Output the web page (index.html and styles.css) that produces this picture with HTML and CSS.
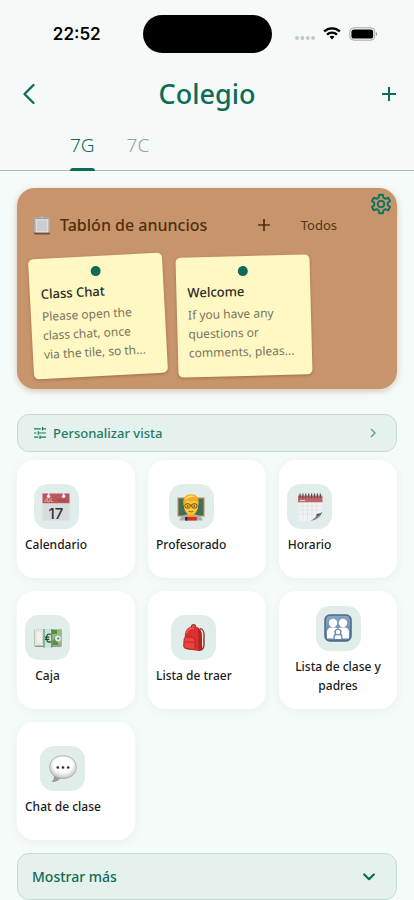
FILE: index.html
```html
<!DOCTYPE html>
<html lang="es">

<head>
    <meta charset="UTF-8">
    <meta name="viewport" content="width=device-width, initial-scale=1.0">
    <title>Colegio</title>
    <link rel="stylesheet" href="styles.css">
</head>

<body>
    <header class="top">
        <div class="status">
            <span class="time">22:52</span>
            <span class="island"></span>
            <span class="signals">
                <svg width="20" height="6" viewBox="0 0 20 6" fill="#c3c8c7">
                    <circle cx="2" cy="3" r="1.9" />
                    <circle cx="7.4" cy="3" r="1.9" />
                    <circle cx="12.8" cy="3" r="1.9" />
                    <circle cx="18.1" cy="3" r="1.9" />
                </svg>
                <svg class="wifi" width="18" height="13" viewBox="0 0 18 13" fill="none" stroke="#000" stroke-width="2.3">
                    <path d="M1.2 4.5a11.2 11.2 0 0 1 15.6 0" />
                    <path d="M4 7.6a7.2 7.2 0 0 1 10 0" />
                    <path d="M6.5 9.7a4 4 0 0 1 5 0L9 12.4z" fill="#000" stroke="none" />
                </svg>
                <svg width="29" height="14" viewBox="0 0 29 14">
                    <rect x=".8" y=".8" width="25" height="12.4" rx="4" fill="none" stroke="#a2a6a5" />
                    <rect x="2.4" y="2.4" width="21.8" height="9.2" rx="2.6" />
                    <path d="M27 5v4c1.6-.6 1.6-3.4 0-4z" fill="#9a9e9d" />
                </svg>
            </span>
        </div>
        <div class="navbar">
            <button class="icon-btn back" type="button" aria-label="Atrás">
                <svg width="14" height="22" viewBox="0 0 14 22" fill="none" stroke="#0d6b58" stroke-width="2.3" stroke-linecap="round" stroke-linejoin="round">
                    <path d="M11.5 2L2.5 11l9 9" />
                </svg>
            </button>
            <h1>Colegio</h1>
            <button class="icon-btn right" type="button" aria-label="Añadir">
                <svg width="16" height="16" viewBox="0 0 16 16" fill="none" stroke="#0d6b58" stroke-width="2">
                    <path d="M8 1v14M1 8h14" />
                </svg>
            </button>
        </div>
        <nav class="tabs">
            <button class="tab active" type="button">7G</button>
            <button class="tab" type="button">7C</button>
        </nav>
    </header>

    <main>
        <section class="board">
            <button class="gear" type="button" aria-label="Ajustes">
                <svg width="22" height="22" viewBox="0 0 24 24" fill="none" stroke="#0d7560" stroke-width="2.2" stroke-linejoin="round">
                    <path d="M9.6 4.9L10 1.8h4l.4 3.1 2.5 1.5 3-1.2 2 3.5-2.5 1.9v2.8l2.5 1.9-2 3.5-3-1.2-2.5 1.5-.4 3.1h-4l-.4-3.1-2.5-1.5-3 1.2-2-3.5 2.5-1.9v-2.8L2.1 8.7l2-3.500 3 1.200z" />
                    <circle cx="12" cy="12" r="3.6" />
                </svg>
            </button>
            <div class="board-head">
                <svg width="18" height="22" viewBox="0 0 18 22">
                    <rect x="1" y="3" width="16" height="17" rx="1" fill="#a9a9a9" />
                    <rect x="1" y="18.6" width="16" height="1.8" rx=".8" fill="#6e5038" />
                    <rect x="2.6" y="5" width="12.8" height="13.4" fill="#dedede" />
                    <rect x="4" y="6.4" width="10" height="10.6" fill="#cdcdcf" />
                    <path d="M4 4.600l2-2h1.600a1.500 1.500 0 0 1 2.800 0H12l2 2z" fill="#b9bcbe" stroke="#8b8783" stroke-width=".5" />
                </svg>
                <h2>Tablón de anuncios</h2>
                <button class="icon-btn" type="button" aria-label="Nuevo anuncio">
                    <svg width="14" height="14" viewBox="0 0 14 14" fill="none" stroke="#4f300c" stroke-width="1.7">
                        <path d="M7 1v12M1 7h12" />
                    </svg>
                </button>
                <a class="all" href="#">Todos</a>
            </div>
            <div class="notes">
                <article class="note tilt-more">
                    <span class="pin"></span>
                    <h3>Class Chat</h3>
                    <p>Please open the<br>class chat, once<br>via the tile, so th...</p>
                </article>
                <article class="note tilt-less">
                    <span class="pin"></span>
                    <h3>Welcome</h3>
                    <p>If you have any<br>questions or<br>comments, pleas...</p>
                </article>
            </div>
        </section>

        <button class="bar customize" type="button">
            <svg width="12" height="12" viewBox="0 0 12 12" fill="none" stroke="#1f7a65" stroke-width="1.2">
                <path d="M0 1.8h6.8M9 1.8h3M8.5 0v3.6M0 6h2.4M5 6h7M4.3 4.2v3.6M0 10.2h4.4M6.6 10.2H12M6 8.4V12" />
            </svg>
            <span>Personalizar vista</span>
            <svg width="6" height="10" viewBox="0 0 6 10" fill="none" stroke="#5f9f8f" stroke-width="1.4">
                <path d="M1 1l4 4-4 4" />
            </svg>
        </button>

        <div class="tiles">
            <a class="tile" href="#">
                <span class="tile-body">
                    <span class="tile-icon">
                        <svg width="28" height="28" viewBox="0 0 28 28">
                            <rect x=".5" y=".5" width="27" height="27" fill="#d9dadb" />
                            <path d="M.5.5h27v9.7H.5z" fill="#b9565a" />
                            <circle cx="6.6" cy="3.2" r="1.7" fill="#f6f1f0" />
                            <circle cx="21.6" cy="3.2" r="1.7" fill="#f6f1f0" />
                            <path d="M6 0h1.2v3H6zM21 0h1.2v3H21z" fill="#eee" />
                            <text x="2" y="9" class="cal-month">JUL</text>
                            <path d="M16 7.6h9.5" stroke="#a14b50" stroke-width="2.2" stroke-dasharray="1.6 .5" />
                            <text x="14" y="25.500" text-anchor="middle" class="cal-day">17</text>
                        </svg>
                    </span>
                    <span class="tile-name">Calendario</span>
                </span>
            </a>
            <a class="tile" href="#">
                <span class="tile-body">
                    <span class="tile-icon">
                        <svg width="28" height="28" viewBox="0 0 28 28">
                            <rect x=".5" y="4.5" width="27" height="19" fill="#b98a55" />
                            <rect x="1.7" y="5.7" width="24.6" height="16.6" fill="#3f6f5b" />
                            <path d="M2.500 27.500c.3-4 4.200-5.600 8-6.200h7c3.800.6 7.700 2.200 8 6.200z" fill="#a9aeb4" />
                            <path d="M10.500 19h7v4.500L14 25l-3.500-1.500z" fill="#efa920" />
                            <ellipse cx="14" cy="13.200" rx="7" ry="8.600" fill="#fdc634" />
                            <path d="M6.800 13C5 5.500 8.400 1 14 1.200c6-.2 9 4.300 7.200 11.800-.9-1-1.300-2.600-1.900-5.200-3.500.8-7.500.5-9.700-.6-.6 2.700-1.200 4.400-2.800 5.800z" fill="#f5ae24" />
                            <path d="M8 7C9 3 13 1.600 18.600 3.300 14.500 3.600 11 5 8 7z" fill="#ffe07a" />
                            <g fill="none" stroke="#5a3c14" stroke-width=".9">
                                <rect x="8" y="10.800" width="5.200" height="4.200" rx="1.800" />
                                <rect x="14.800" y="10.800" width="5.200" height="4.200" rx="1.800" />
                                <path d="M13.200 12.200h1.600" />
                            </g>
                            <circle cx="10.700" cy="13" r=".8" fill="#3a2410" />
                            <circle cx="17.300" cy="13" r=".8" fill="#3a2410" />
                            <path d="M11.800 18.300q2.200 1.200 4.400 0" fill="none" stroke="#a5521c" stroke-width=".9" />
                            <rect x="8.200" y="24" width="11.600" height="3.500" fill="#e02b2b" />
                            <path d="M8.200 24h2v3.500h-2z" fill="#23242c" />
                        </svg>
                    </span>
                    <span class="tile-name">Profesorado</span>
                </span>
            </a>
            <a class="tile" href="#">
                <span class="tile-body">
                    <span class="tile-icon">
                        <svg width="28" height="28" viewBox="0 0 28 28">
                            <path d="M2.5 2.5h24v17l-8 8.3h-15c-.6 0-.8-.4-.8-1z" fill="#f2f2f4" />
                            <path d="M2 2.5h24.5v6.8H2z" fill="#c26367" />
                            <path d="M4 7.6h5" stroke="#efc9ca" stroke-width="1.1" />
                            <path d="M3 13h23M3 17h23M3 21h20M7 10v17M11.5 10v17M16 10v16M20.5 10v12" stroke="#dadade" stroke-width=".6" />
                            <path d="M26.5 18.500c-1.500 2-3.500 2.300-5.500 2.500-.6 2.700-3 5-6.500 6.800 5.500-.3 10.500-3.800 12-9.300z" fill="#88898d" />
                            <path d="M26.500 18.500c-1.500 2-3.500 2.300-5.500 2.500l-.8 2.500c2.600-1 4.900-2.500 6.300-5z" fill="#4a4b4f" />
                            <path d="M4 .5v4.800M6.900.5v4.800M9.800.5v4.800M12.700.5v4.800M15.600.5v4.800M18.500.5v4.800M21.400.5v4.800M24.300.5v4.800" stroke="#505157" stroke-width="1.2" />
                        </svg>
                    </span>
                    <span class="tile-name">Horario</span>
                </span>
            </a>
            <a class="tile" href="#">
                <span class="tile-body">
                    <span class="tile-icon">
                        <svg width="28" height="28" viewBox="0 0 28 28">
                            <path d="M.5 5.5h27l.2 16.5-1 1H1.500l-1-1z" fill="#8f9a88" />
                            <path d="M1 5.500h9v16H1z" fill="#f1f2ee" />
                            <path d="M2 7h6.500v13H2z" fill="none" stroke="#c6cac2" stroke-width=".6" />
                            <path d="M17.500 5.500h10v16h-10z" fill="#9cb87c" />
                            <path d="M18 6h5v4h-5zM18.500 17l4-5 2 9h-6z" fill="#5d8b48" />
                            <circle cx="24" cy="14.500" r="3" fill="#dbe8ee" />
                            <circle cx="24.300" cy="14.500" r="1.100" fill="#4779a6" />
                            <path d="M9.500 5H18v18.500H9.500z" fill="#cfe3d7" />
                            <path d="M10 5v18.500M17.700 5v18.500" stroke="#33a36d" stroke-width="1.200" />
                            <path d="M16.800 10.500c-3-1.600-4.400.9-4.400 3.700s1.500 5 4.400 3.400M11 13.200h4.300M11 15.300h4.200" fill="none" stroke="#26442f" stroke-width="1.200" />
                        </svg>
                    </span>
                    <span class="tile-name">Caja</span>
                </span>
            </a>
            <a class="tile" href="#">
                <span class="tile-body">
                    <span class="tile-icon">
                        <svg width="28" height="28" viewBox="0 0 28 28">
                            <path d="M20 4.500c3.500.5 4.500 5 4 9s.8 7-.5 10-4 3-5 2" fill="none" stroke="#8d3c2c" stroke-width="1.500" />
                            <path d="M11.500 3c0-3 4-3 4 0" fill="none" stroke="#a62821" stroke-width="1.300" />
                            <path d="M5 10c.5-5 4.500-8 9-7.700 4.500.4 7.500 3 7.800 8l.3 13.500c0 2-1.700 3-3.500 3.200L8 25.500c-3-.4-4.500-1.500-4.400-4z" fill="#d9322c" />
                            <path d="M17.500 4c3 1.500 4.200 4 4.300 7l.3 12.800c0 2-1.700 3-3.500 3.200-.7-7 .5-16-1.100-23z" fill="#b5221f" />
                            <path d="M4 16c0-2.500 2-3.300 5-3 3.500.2 6 1 6 4v6.500c0 1.500-1 2-2.500 1.900L6.500 24.500c-2-.2-2.900-1-2.800-2.800z" fill="#e9453c" stroke="#aa211d" stroke-width=".8" />
                            <path d="M6.500 9c1-3.300 4-5 7.500-4.700" fill="none" stroke="#f27267" stroke-width="1.200" />
                            <path d="M4.500 18.500c3-1 7-.8 10 .4" fill="none" stroke="#b62a25" stroke-width=".8" />
                        </svg>
                    </span>
                    <span class="tile-name">Lista de traer</span>
                </span>
            </a>
            <a class="tile" href="#">
                <span class="tile-body">
                    <span class="tile-icon">
                        <svg width="28" height="28" viewBox="0 0 28 28">
                            <defs>
                                <linearGradient id="family" x1="0" y1="0" x2="0" y2="1">
                                    <stop offset="0" stop-color="#8ba5c2" />
                                    <stop offset="1" stop-color="#5f81a7" />
                                </linearGradient>
                            </defs>
                            <rect x="1" y="1" width="26" height="26" rx="5" fill="url(#family)" stroke="#486987" stroke-width="1.5" />
                            <g fill="#fff">
                                <circle cx="9" cy="9" r="4.2" />
                                <circle cx="19" cy="9" r="4.2" />
                                <path d="M3 24.5V18c0-3 2-4.500 4-4.500h4.200c1.500 0 2.300.8 2.800 1.700.5-.9 1.300-1.700 2.800-1.700H21c2 0 4 1.500 4 4.500v6.500z" />
                            </g>
                            <path d="M9.500 25v-2.500c0-1.300.6-2 1.600-2.400-2-3 .2-5.300 2.900-5.300s4.900 2.300 2.900 5.300c1 .4 1.600 1.100 1.600 2.400V25z" fill="#6a89ac" />
                            <circle cx="14" cy="18" r="2.200" fill="#fff" />
                            <path d="M10.800 25v-2c0-1.200.8-1.800 1.800-1.800h2.800c1 0 1.800.6 1.800 1.800v2z" fill="#fff" />
                        </svg>
                    </span>
                    <span class="tile-name">Lista de clase y padres</span>
                </span>
            </a>
            <a class="tile" href="#">
                <span class="tile-body">
                    <span class="tile-icon">
                        <svg width="28" height="28" viewBox="0 0 28 28">
                            <defs>
                                <radialGradient id="bubble" cx=".5" cy=".4" r=".62">
                                    <stop offset=".55" stop-color="#fff" />
                                    <stop offset="1" stop-color="#b9b9b9" />
                                </radialGradient>
                            </defs>
                            <path d="M5 20c.3 3-.7 5.500-2.500 7 4 .3 7.200-1.200 9-4z" fill="#9b9b9b" />
                            <path d="M14 .8c8 0 13.300 4.800 13.300 11.300S22 23.500 14 23.500.7 18.600.7 12.100 6 .8 14 .8z" fill="url(#bubble)" stroke="#a5a5a5" stroke-width=".8" />
                            <g fill="#2d2d2f">
                                <circle cx="8.800" cy="12.500" r="1.300" />
                                <circle cx="14" cy="12.500" r="1.300" />
                                <circle cx="19.200" cy="12.500" r="1.300" />
                            </g>
                        </svg>
                    </span>
                    <span class="tile-name">Chat de clase</span>
                </span>
            </a>
        </div>

        <button class="bar more" type="button">
            <span>Mostrar más</span>
            <svg width="12" height="8" viewBox="0 0 12 8" fill="none" stroke="#0d6b58" stroke-width="2.2" stroke-linecap="round" stroke-linejoin="round">
                <path d="M1.200 1.500L6 6.200l4.800-4.700" />
            </svg>
        </button>
    </main>
</body>

</html>
```
FILE: styles.css
```css
* {
    box-sizing: border-box;
}

body {
    margin: 0;
    background-color: #f5fbf8;
    font-family: "Noto Sans", "Open Sans", sans-serif;
    color: #1b1b20;
}

h1,
h2,
h3,
p {
    margin: 0;
}

button {
    border: none;
    padding: 0;
    background: none;
    font-family: inherit;
    cursor: pointer;
}

a {
    color: inherit;
    text-decoration: none;
}

svg {
    display: block;
    flex: none;
}

/* header */
.top {
    background-color: #f5faf9;
    border-bottom: 1px solid #b4b9b8;
}

.status {
    display: grid;
    grid-template-columns: 1fr 129px 1fr;
    align-items: center;
    height: 67px;
}

.time {
    padding-left: 11px;
    text-align: center;
    font-family: "Inter", sans-serif;
    font-size: 17px;
    font-weight: 600;
    color: #000;
}

.island {
    height: 38px;
    border-radius: 19px;
    background-color: #000;
}

.signals {
    display: flex;
    align-items: center;
    justify-content: flex-end;
    gap: 8px;
    padding-right: 36px;
}

.signals svg:first-child {
    align-self: flex-end;
}

.navbar {
    display: grid;
    grid-template-columns: 1fr auto 1fr;
    align-items: center;
    height: 53px;
    padding: 0 17px;
}

.icon-btn {
    display: flex;
    align-items: center;
    height: 24px;
}

.back {
    padding-left: 5px;
}

.right {
    justify-self: end;
}

h1 {
    font-size: 27px;
    line-height: 36px;
    font-weight: 500;
    color: #0d6b58;
}

.tabs {
    display: flex;
    gap: 32px;
    height: 50px;
    padding-left: 70px;
}

.tab {
    font-size: 19px;
    font-weight: 300;
    color: #999d9c;
}

.tab.active {
    position: relative;
    color: #0d6b58;
}

.tab.active::after {
    content: "";
    position: absolute;
    left: 0;
    right: 0;
    bottom: -1px;
    height: 3px;
    border-radius: 3px 3px 0 0;
    background-color: #0d6b58;
}

main {
    padding: 17px 17px 0;
}

/* notice board */
.board {
    position: relative;
    margin-bottom: 25px;
    padding: 20px 14px 13px;
    border-radius: 18px;
    background-color: #c8946c;
    box-shadow: 0 2px 6px rgba(150, 100, 50, 0.35);
}

.gear {
    position: absolute;
    top: 5px;
    right: 5px;
}

.board-head {
    display: flex;
    align-items: center;
    height: 34px;
    margin-bottom: 14px;
    padding: 0 46px 0 2px;
    color: #56340f;
}

.board-head h2 {
    flex: 1;
    padding-left: 9px;
    font-size: 16px;
    line-height: 24px;
    font-weight: 500;
    color: #4f300c;
}

.all {
    padding-left: 30px;
    font-size: 13px;
}

.notes {
    display: flex;
    gap: 12px;
}

.note {
    width: 134px;
    height: 120px;
    padding: 10px 11px;
    border-radius: 5px;
    background-color: #fff8c3;
    box-shadow: 0 1px 3px rgba(70, 40, 10, 0.35);
}

.tilt-more {
    transform: rotate(-3deg);
}

.tilt-less {
    transform: rotate(-1.5deg);
}

.pin {
    display: block;
    width: 10px;
    height: 10px;
    margin: 0 auto 5px;
    border-radius: 50%;
    background-color: #0d6b58;
}

.note h3 {
    margin-bottom: 3px;
    font-size: 13px;
    line-height: 20px;
    font-weight: 500;
    color: #2a2a22;
}

.note p {
    font-size: 12px;
    line-height: 19px;
    color: #77755f;
}

/* wide buttons */
.bar {
    display: flex;
    align-items: center;
    width: 100%;
    border: 1px solid #c2dbd5;
    border-radius: 12px;
    background-color: #e5f1ed;
    text-align: left;
    font-weight: 500;
    color: #1f7a65;
}

.bar span {
    flex: 1;
}

.customize {
    gap: 7px;
    height: 38px;
    margin-bottom: 8px;
    padding: 0 20px 0 16px;
    font-size: 13px;
}

.more {
    height: 47px;
    padding: 0 21px 0 14px;
    font-size: 14px;
    color: #0d6b58;
}

/* tiles */
.tiles {
    display: grid;
    grid-template-columns: repeat(3, 1fr);
    gap: 13px;
    margin-bottom: 13px;
}

.tile {
    display: flex;
    align-items: center;
    aspect-ratio: 1;
    padding: 8px;
    border-radius: 17px;
    background-color: #fff;
    box-shadow: 0 2px 10px rgba(20, 80, 60, 0.06);
}

.tile-body {
    display: flex;
    flex-direction: column;
    align-items: center;
    gap: 6px;
}

.tile-icon {
    display: grid;
    place-items: center;
    width: 45px;
    height: 45px;
    border-radius: 14px;
    background-color: #e0edea;
}

.tile-name {
    font-size: 12px;
    line-height: 19px;
    font-weight: 500;
    text-align: center;
}

.cal-month {
    font-family: "Inter", sans-serif;
    font-size: 5px;
    fill: #f0d5d5;
}

.cal-day {
    font-family: "Inter", sans-serif;
    font-size: 15px;
    font-weight: 500;
    fill: #333336;
}
```
